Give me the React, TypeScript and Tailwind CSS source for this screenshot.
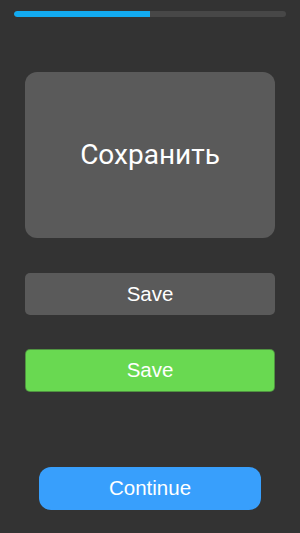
export default function App() {
  return (
    <div className="min-h-screen h-[533px] bg-[#333333] flex flex-col font-['Liberation_Sans',Arial,sans-serif]">
      {/* Progress */}
      <div className="px-[14px] pt-[11px]">
        <div className="h-[6px] w-full rounded-full bg-[#474747] overflow-hidden">
          <div className="h-full w-1/2 bg-[#12aaf0] rounded-l-full" />
        </div>
      </div>

      <div className="px-[25px] flex flex-col">
        {/* Big card */}
        <div className="mt-[55px] h-[166px] rounded-[12px] bg-[#5a5a5a] flex items-center justify-center">
          <span className="text-white text-[28px] font-['Roboto',sans-serif]">Сохранить</span>
        </div>

        <button className="mt-[35px] h-[42px] rounded-[5px] bg-[#5a5a5a] text-white text-[20.5px] flex items-center justify-center">
          Save
        </button>

        <button className="mt-[34px] h-[43px] rounded-[5px] bg-[#69d951] border border-[#2a2a2a]/40 text-white text-[20.5px] flex items-center justify-center">
          Save
        </button>
      </div>

      <div className="px-[39px] mt-[75px]">
        <button className="w-full h-[43px] rounded-[12px] bg-[#389ffc] text-white text-[20.5px] flex items-center justify-center">
          Continue
        </button>
      </div>
    </div>
  );
}
